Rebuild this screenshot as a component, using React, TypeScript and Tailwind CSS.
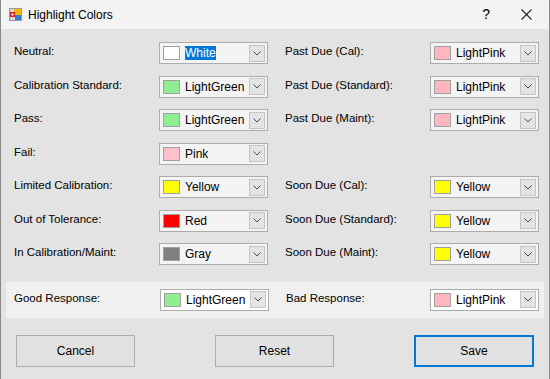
type Pick = { label: string; color: string; name: string };

const leftRows: Pick[] = [
    { label: "Neutral:", color: "#ffffff", name: "White" },
    { label: "Calibration Standard:", color: "#90ee90", name: "LightGreen" },
    { label: "Pass:", color: "#90ee90", name: "LightGreen" },
    { label: "Fail:", color: "#ffc0cb", name: "Pink" },
    { label: "Limited Calibration:", color: "#ffff00", name: "Yellow" },
    { label: "Out of Tolerance:", color: "#ff0000", name: "Red" },
    { label: "In Calibration/Maint:", color: "#808080", name: "Gray" },
];

const rightRows: (Pick | null)[] = [
    { label: "Past Due (Cal):", color: "#ffb6c1", name: "LightPink" },
    { label: "Past Due (Standard):", color: "#ffb6c1", name: "LightPink" },
    { label: "Past Due (Maint):", color: "#ffb6c1", name: "LightPink" },
    null,
    { label: "Soon Due (Cal):", color: "#ffff00", name: "Yellow" },
    { label: "Soon Due (Standard):", color: "#ffff00", name: "Yellow" },
    { label: "Soon Due (Maint):", color: "#ffff00", name: "Yellow" },
];

const ColorCombo = ({ color, name, selected = false, white = false }: { color: string; name: string; selected?: boolean; white?: boolean }) => (
    <div className={`w-[109px] h-[22px] flex items-center border border-[#acacac] ${white ? "bg-white" : "bg-[#f4f4f4]"} pl-[3px] pr-[2px]`}>
        <div className="w-[17px] h-[14px] border border-[#a0a0a0]" style={{ backgroundColor: color }} />
        <div className="flex-1 pl-[5px] text-[12px] leading-[14px] text-black">
            <span className={selected ? "bg-[#0078d7] text-white" : ""}>{name}</span>
        </div>
        <div className="w-[16px] h-[17px] flex items-center justify-center border border-[#c4c4c4] bg-[#e4e4e4]">
            <svg width="8" height="5" viewBox="0 0 8 5">
                <path d="M0.5 0.5 L4 4 L7.5 0.5" fill="none" stroke="#4a4a4a" strokeWidth="1" />
            </svg>
        </div>
    </div>
);

const AppIcon = () => (
    <svg width="13" height="13" viewBox="0 0 13 13">
        <rect x="0.5" y="0.5" width="12" height="12" fill="#d8d8d8" stroke="#9a9a9a" />
        <rect x="5" y="1" width="7" height="6" fill="#f5b800" />
        <rect x="6" y="7" width="6" height="5" fill="#2f7fd8" />
        <rect x="1" y="4" width="5" height="5" fill="#d42020" />
        <rect x="2.5" y="5.5" width="2" height="2" fill="#ffffff" />
    </svg>
);

export default function App() {
    return (
        <div className="w-[550px] h-[379px] flex flex-col bg-[#e3e3e3] border-x border-[#8a8a8a] font-['Liberation_Sans',Arial,sans-serif] text-[11.5px] text-black overflow-hidden">
            {/* title bar */}
            <div className="h-[29px] flex items-center bg-[#f3f3f3] pl-[8px] shrink-0">
                <AppIcon />
                <span className="ml-[6px] text-[12px]">Highlight Colors</span>
                <span className="ml-auto mr-[31px] text-[14px]">?</span>
                <svg width="11" height="11" viewBox="0 0 11 11" className="mr-[17px]">
                    <path d="M0.5 0.5 L10.5 10.5 M10.5 0.5 L0.5 10.5" stroke="#222" strokeWidth="1.1" />
                </svg>
            </div>

            {/* color rows */}
            <div className="flex flex-col pt-[13px] pl-[13px]">
                {leftRows.map((row, i) => {
                    const right = rightRows[i];
                    return (
                        <div key={row.label} className="h-[33.5px] flex items-start">
                            <div className="w-[145px] mt-[2px] leading-[14px]">{row.label}</div>
                            <ColorCombo color={row.color} name={row.name} selected={i === 0} />
                            {right && (
                                <>
                                    <div className="w-[145px] ml-[17px] mt-[2px] leading-[14px]">{right.label}</div>
                                    <ColorCombo color={right.color} name={right.name} />
                                </>
                            )}
                        </div>
                    );
                })}
            </div>

            {/* response panel */}
            <div className="mt-[5px] mx-[5px] h-[36px] bg-[#f0f0f0] flex items-start pt-[7px] pl-[8px]">
                <div className="w-[146px] mt-[2px] leading-[14px]">Good Response:</div>
                <ColorCombo color="#90ee90" name="LightGreen" white />
                <div className="w-[144px] ml-[17px] mt-[2px] leading-[14px]">Bad Response:</div>
                <ColorCombo color="#ffb6c1" name="LightPink" white />
            </div>

            {/* buttons */}
            <div className="mt-[17px] flex items-center pl-[15px] gap-[81px]">
                <button className="w-[119px] h-[32px] bg-[#e1e1e1] border border-[#adadad] text-[12px]">Cancel</button>
                <button className="w-[119px] h-[32px] bg-[#e1e1e1] border border-[#adadad] text-[12px] -ml-[1px]">Reset</button>
                <button className="w-[120px] h-[32px] bg-[#e1e1e1] border-2 border-[#0078d7] text-[12px] -ml-[1px]">Save</button>
            </div>
        </div>
    );
}
